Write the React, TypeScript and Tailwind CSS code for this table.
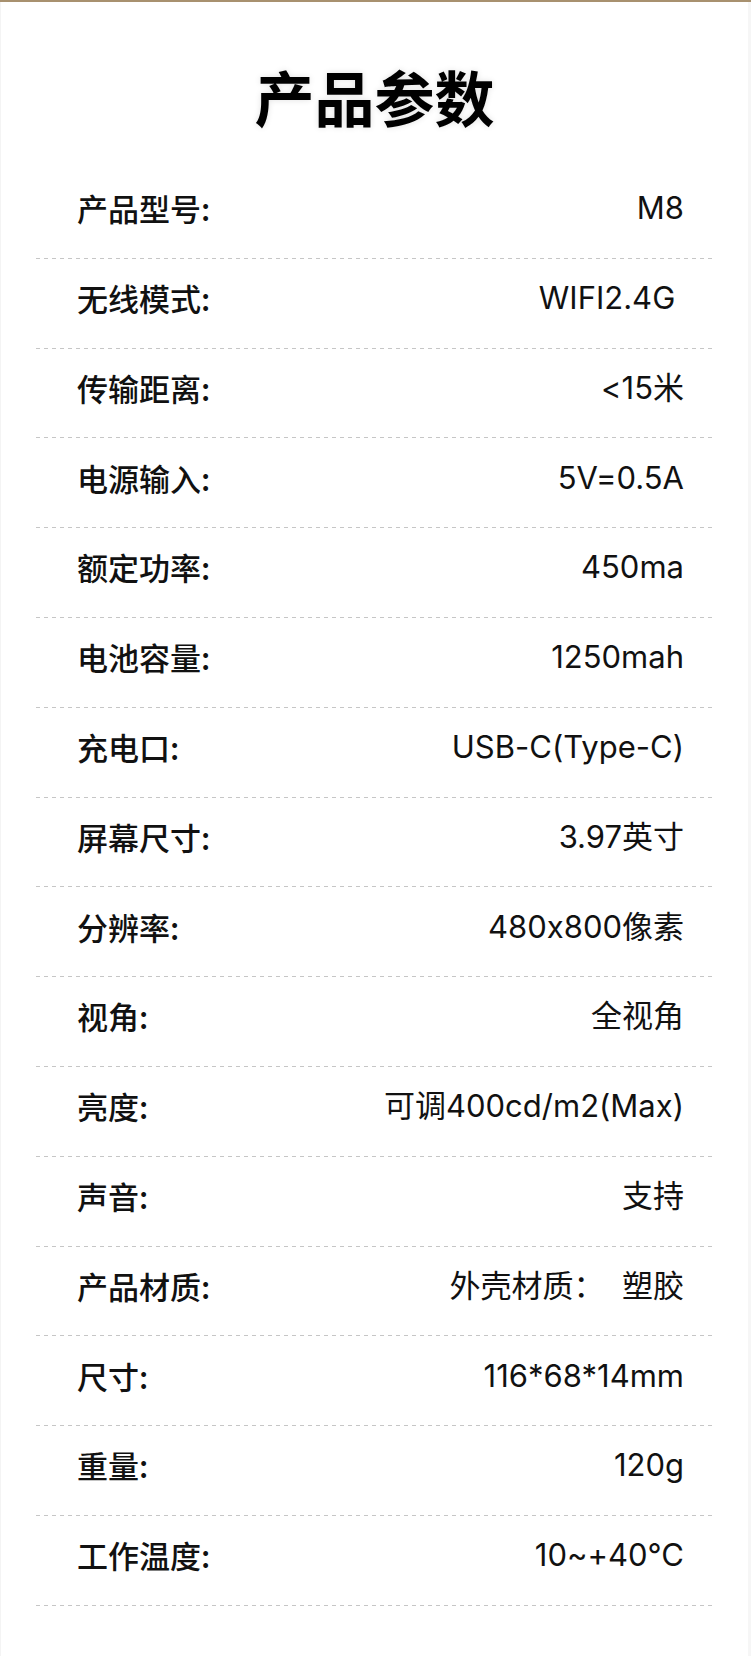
import React from "react";

const rows: [string, string][] = [
  ["产品型号:", "M8"],
  ["无线模式:", "WIFI2.4G\u00a0"],
  ["传输距离:", "<15米"],
  ["电源输入:", "5V=0.5A"],
  ["额定功率:", "450ma"],
  ["电池容量:", "1250mah"],
  ["充电口:", "USB-C(Type-C)"],
  ["屏幕尺寸:", "3.97英寸"],
  ["分辨率:", "480x800像素"],
  ["视角:", "全视角"],
  ["亮度:", "可调400cd/m2(Max)"],
  ["声音:", "支持"],
  ["产品材质:", "外壳材质：  塑胶"],
  ["尺寸:", "116*68*14mm"],
  ["重量:", "120g"],
  ["工作温度:", "10~+40℃"],
];

export default function App() {
  return (
    <div className="w-[751px] h-[1656px] bg-white border-t-2 border-[#a8916f] overflow-hidden">
      <div className="h-[1654px] border-l border-r-[3px] border-l-[#f4f4f4] border-r-[#f6f6f6]">
        <div className="h-[167px] pt-[58px] flex justify-center">
          <h1
            className="text-[60px] leading-[72px] font-bold text-black [text-shadow:0_0_6px_rgba(0,0,0,0.12)]"
            style={{ fontFamily: '"Noto Sans CJK SC", sans-serif' }}
          >
            产品参数
          </h1>
        </div>
        {rows.map(([k, v]) => (
          <div key={k} className="h-[89.8px] flex flex-col">
            <div className="flex-1 flex items-center justify-between pl-[76px] pr-[64px] pb-[10px] text-[31px] text-[#111]">
              <span
                className="font-medium"
                style={{ fontFamily: '"Noto Sans CJK SC", sans-serif' }}
              >
                {k}
              </span>
              <span
                className="whitespace-pre [font-feature-settings:'calt'_0]"
                style={{ fontFamily: 'Inter, "Noto Sans CJK SC", sans-serif' }}
              >
                {v}
              </span>
            </div>
            <div className="mx-[35px] h-px bg-[linear-gradient(to_right,#c6c6c6_50%,transparent_50%)] bg-[length:8px_1px] bg-repeat-x" />
          </div>
        ))}
      </div>
    </div>
  );
}
